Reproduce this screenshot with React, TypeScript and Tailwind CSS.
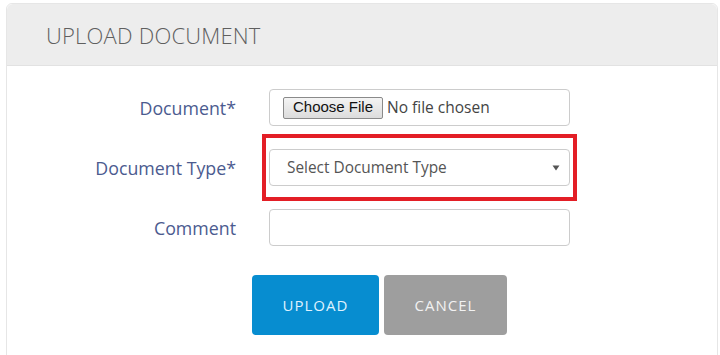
import React from "react";

const font = { fontFamily: '"Open Sans", "Noto Sans", sans-serif' };

function Label({ children }: { children: React.ReactNode }) {
  return (
    <div className="w-[236px] shrink-0 pt-[2px] text-right text-[17.8px] leading-none text-[#4b5b8f]">
      {children}
    </div>
  );
}

export default function App() {
  return (
    <div className="w-[720px] h-[355px] overflow-hidden bg-white" style={font}>
      <div className="ml-[6px] mt-[3px] w-[712px] h-[400px] rounded-t-[6px] border border-[#e6e6e6] bg-white">
        <div className="h-[62px] rounded-t-[6px] border-b border-[#e2e2e2] bg-[#ededed] pl-[39px] pt-[20px]">
          <span className="text-[22px] font-light leading-none tracking-[0.2px] text-[#5f5f5f]">
            UPLOAD DOCUMENT
          </span>
        </div>
        <div className="pt-[23px]">
          <div className="flex items-center -ml-[7px]">
            <Label>Document*</Label>
            <div className="ml-[33px] flex h-[37px] w-[301px] items-center rounded-[4px] border border-[#cccccc] pl-[13px]">
              <div
                className="flex h-[22px] w-[100px] items-center justify-center rounded-[2px] border border-[#8a8a8a] bg-gradient-to-b from-[#f4f4f4] to-[#dcdcdc] text-[15px] text-[#111]"
                style={{ fontFamily: '"Liberation Sans", Arial, sans-serif' }}
              >
                Choose File
              </div>
              <span className="ml-[4px] text-[15.5px] text-[#444]">No file chosen</span>
            </div>
          </div>
          <div className="flex items-center -ml-[7px] mt-[8px]">
            <Label>Document Type*</Label>
            <div className="ml-[26px] border-[4px] border-[#e31e26] px-[3px] py-[11px]">
              <div className="flex h-[37px] w-[301px] items-center justify-between rounded-[4px] border border-[#cccccc] pl-[17px] pr-[9px]">
                <span className="text-[15.4px] text-[#555]">Select Document Type</span>
                <svg width="8" height="6" viewBox="0 0 8 6">
                  <path d="M0.5 0.5 L7.5 0.5 L4 5.5 Z" fill="#555" />
                </svg>
              </div>
            </div>
          </div>
          <div className="flex items-center -ml-[7px] mt-[8px]">
            <Label>Comment</Label>
            <div className="ml-[33px] h-[37px] w-[301px] rounded-[4px] border border-[#cccccc]" />
          </div>
          <div className="mt-[29px] flex gap-[5px] pl-[245px]">
            <div className="flex h-[60px] w-[127px] items-center justify-center rounded-[4px] bg-[#078dd0] text-[15px] tracking-[1px] text-[#dff2ff]">
              UPLOAD
            </div>
            <div className="flex h-[60px] w-[123px] items-center justify-center rounded-[4px] bg-[#9e9e9e] text-[15px] tracking-[1px] text-[#f2f2f2]">
              CANCEL
            </div>
          </div>
        </div>
      </div>
    </div>
  );
}
